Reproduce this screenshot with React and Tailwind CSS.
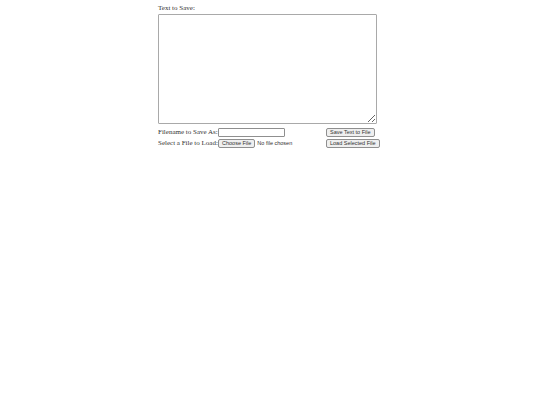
export default function App() {
  return (
    <div className="w-[540px] h-[405px] bg-white">
      <div className="ml-[158px] pt-[4px] w-[222px] font-['Liberation_Serif',serif] text-[7px] leading-[9px] text-[#333]">
        <div>Text to Save:</div>
        <textarea className="block mt-[1px] w-[219px] h-[110px] border border-[#a9a9a9] rounded-[1px] bg-white resize-y"></textarea>
        <div className="grid grid-cols-[60px_108px_auto] grid-rows-[10px_10px] items-center gap-y-[1px] mt-[3px]">
          <span className="whitespace-nowrap">Filename to Save As:</span>
          <input type="text" className="w-[67px] h-[9px] border border-[#8f8f8f] rounded-[1px] bg-white" />
          <button className="justify-self-start h-[9px] px-[3px] border border-[#8f8f8f] rounded-[2px] bg-[#efefef] font-['Liberation_Sans',sans-serif] text-[5.5px] leading-[7px] whitespace-nowrap">
            Save Text to File
          </button>
          <span className="whitespace-nowrap">Select a File to Load:</span>
          <div className="flex items-center gap-[2px] whitespace-nowrap font-['Liberation_Sans',sans-serif] text-[5.5px] leading-[7px]">
            <span className="h-[9px] px-[3px] flex items-center border border-[#8f8f8f] rounded-[2px] bg-[#efefef]">Choose File</span>
            <span>No file chosen</span>
          </div>
          <button className="justify-self-start h-[9px] px-[3px] border border-[#8f8f8f] rounded-[2px] bg-[#efefef] font-['Liberation_Sans',sans-serif] text-[5.5px] leading-[7px] whitespace-nowrap">
            Load Selected File
          </button>
        </div>
      </div>
    </div>
  );
}
